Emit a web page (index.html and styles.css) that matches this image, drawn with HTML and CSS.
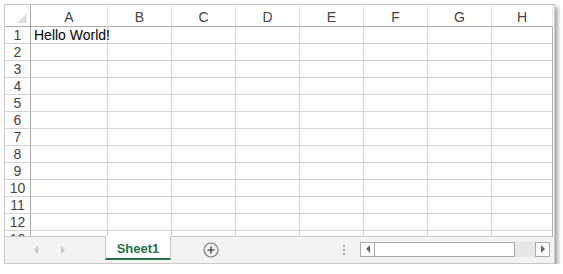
FILE: index.html
```html
<!DOCTYPE html>
<html lang="en">
<head>
  <meta charset="UTF-8" />
  <title>Sheet1</title>
  <link rel="stylesheet" href="styles.css">
</head>
<body>
  <div class="window">
    <div class="grid">
      <div class="row head">
        <div class="rh corner"><span class="tri"></span></div>
        <div class="c ca">A</div>
        <div class="c">B</div>
        <div class="c">C</div>
        <div class="c">D</div>
        <div class="c">E</div>
        <div class="c">F</div>
        <div class="c">G</div>
        <div class="c ch">H</div>
      </div>
      <div class="row"><div class="rh">1</div><div class="c ca text">Hello World!</div><div class="c"></div><div class="c"></div><div class="c"></div><div class="c"></div><div class="c"></div><div class="c"></div><div class="c ch"></div></div>
      <div class="row"><div class="rh">2</div><div class="c ca"></div><div class="c"></div><div class="c"></div><div class="c"></div><div class="c"></div><div class="c"></div><div class="c"></div><div class="c ch"></div></div>
      <div class="row"><div class="rh">3</div><div class="c ca"></div><div class="c"></div><div class="c"></div><div class="c"></div><div class="c"></div><div class="c"></div><div class="c"></div><div class="c ch"></div></div>
      <div class="row"><div class="rh">4</div><div class="c ca"></div><div class="c"></div><div class="c"></div><div class="c"></div><div class="c"></div><div class="c"></div><div class="c"></div><div class="c ch"></div></div>
      <div class="row"><div class="rh">5</div><div class="c ca"></div><div class="c"></div><div class="c"></div><div class="c"></div><div class="c"></div><div class="c"></div><div class="c"></div><div class="c ch"></div></div>
      <div class="row"><div class="rh">6</div><div class="c ca"></div><div class="c"></div><div class="c"></div><div class="c"></div><div class="c"></div><div class="c"></div><div class="c"></div><div class="c ch"></div></div>
      <div class="row"><div class="rh">7</div><div class="c ca"></div><div class="c"></div><div class="c"></div><div class="c"></div><div class="c"></div><div class="c"></div><div class="c"></div><div class="c ch"></div></div>
      <div class="row"><div class="rh">8</div><div class="c ca"></div><div class="c"></div><div class="c"></div><div class="c"></div><div class="c"></div><div class="c"></div><div class="c"></div><div class="c ch"></div></div>
      <div class="row"><div class="rh">9</div><div class="c ca"></div><div class="c"></div><div class="c"></div><div class="c"></div><div class="c"></div><div class="c"></div><div class="c"></div><div class="c ch"></div></div>
      <div class="row"><div class="rh">10</div><div class="c ca"></div><div class="c"></div><div class="c"></div><div class="c"></div><div class="c"></div><div class="c"></div><div class="c"></div><div class="c ch"></div></div>
      <div class="row"><div class="rh">11</div><div class="c ca"></div><div class="c"></div><div class="c"></div><div class="c"></div><div class="c"></div><div class="c"></div><div class="c"></div><div class="c ch"></div></div>
      <div class="row"><div class="rh">12</div><div class="c ca"></div><div class="c"></div><div class="c"></div><div class="c"></div><div class="c"></div><div class="c"></div><div class="c"></div><div class="c ch"></div></div>
      <div class="row"><div class="rh">13</div><div class="c ca"></div><div class="c"></div><div class="c"></div><div class="c"></div><div class="c"></div><div class="c"></div><div class="c"></div><div class="c ch"></div></div>
    </div>

    <div class="tabbar">
      <div class="nav">
        <span class="arrow left"></span>
        <span class="arrow right"></span>
      </div>
      <div class="tab">Sheet1</div>
      <div class="add">
        <svg width="16" height="16" viewBox="0 0 16 16">
          <circle cx="8" cy="8" r="7" fill="none" stroke="#777" stroke-width="1.2"/>
          <path d="M8 4.5v7M4.5 8h7" stroke="#555" stroke-width="1.6"/>
        </svg>
      </div>
      <div class="dots"><i></i><i></i><i></i></div>
      <div class="hscroll">
        <div class="btn"><span class="arrow dark left"></span></div>
        <div class="thumb"></div>
        <div class="track"></div>
        <div class="btn"><span class="arrow dark right"></span></div>
      </div>
    </div>
  </div>
</body>
</html>
```

FILE: styles.css
```css
body {
  margin: 0;
  background: #fff;
  font-family: "Liberation Sans", Arial, sans-serif;
}

.window {
  margin: 4px 0 0 4px;
  width: 549px;
  height: 258px;
  border: 1px solid #c8c8c8;
  box-shadow: 3px 3px 4px rgba(0, 0, 0, 0.35);
  display: flex;
  flex-direction: column;
  background: #fff;
}

.grid {
  height: 231px;
  overflow: hidden;
}

.row {
  display: flex;
  height: 17px;
}

.row.head {
  height: 22px;
}

.rh, .c {
  box-sizing: border-box;
  flex: none;
  border-right: 1px solid #d4d4d4;
  border-bottom: 1px solid #d4d4d4;
  font-size: 14px;
  color: #444;
  line-height: 16px;
}

.rh {
  width: 26px;
  text-align: center;
  border-right-color: #ababab;
}

.c {
  width: 64px;
}

.c.ca {
  width: 77px;
}

.c.ch {
  width: 61px;
  border-right-color: #ababab;
}

.head .c, .head .rh {
  border-bottom-color: #ababab;
  border-right-color: #e1e1e1;
  text-align: center;
  line-height: 24px;
}

.head .rh {
  border-right-color: #ababab;
  position: relative;
}

.tri {
  position: absolute;
  right: 3px;
  bottom: 3px;
  width: 0;
  height: 0;
  border-left: 10px solid transparent;
  border-bottom: 10px solid #dfdfdf;
}

.c.text {
  color: #000;
  padding-left: 3px;
  font-size: 14px;
  line-height: 17px;
  white-space: nowrap;
}

.tabbar {
  flex: 1;
  display: flex;
  align-items: stretch;
  background: #f3f3f3;
  border-top: 1px solid #c8c8c8;
}

.nav {
  width: 100px;
  display: flex;
  align-items: center;
  gap: 23px;
  padding-left: 29px;
  box-sizing: border-box;
}

.arrow {
  width: 0;
  height: 0;
  border-top: 4px solid transparent;
  border-bottom: 4px solid transparent;
}

.arrow.left {
  border-right: 4px solid #c6c6c6;
}

.arrow.right {
  border-left: 4px solid #c6c6c6;
}

.arrow.dark.left {
  border-right-color: #666;
}

.arrow.dark.right {
  border-left-color: #666;
}

.tab {
  margin-top: -1px;
  width: 66px;
  box-sizing: border-box;
  background: #fff;
  border-left: 1px solid #c8c8c8;
  border-right: 1px solid #c8c8c8;
  border-bottom: 2px solid #217346;
  margin-bottom: 3px;
  color: #217346;
  font-weight: bold;
  font-size: 13px;
  display: flex;
  align-items: center;
  justify-content: center;
  padding-top: 2px;
}

.add {
  margin-left: 32px;
  display: flex;
  align-items: center;
}

.dots {
  margin-left: 124px;
  display: flex;
  flex-direction: column;
  justify-content: center;
  gap: 2px;
}

.dots i {
  display: block;
  width: 2px;
  height: 2px;
  background: #a6a6a6;
}

.hscroll {
  margin-left: 15px;
  align-self: center;
  display: flex;
  height: 15px;
  margin-top: -2px;
}

.btn {
  width: 15px;
  box-sizing: border-box;
  border: 1px solid #ababab;
  background: #fff;
  display: flex;
  align-items: center;
  justify-content: center;
}

.thumb {
  width: 140px;
  box-sizing: border-box;
  border: 1px solid #ababab;
  border-left: none;
  background: #fff;
}

.track {
  width: 20px;
  background: #e6e6e6;
}
```
